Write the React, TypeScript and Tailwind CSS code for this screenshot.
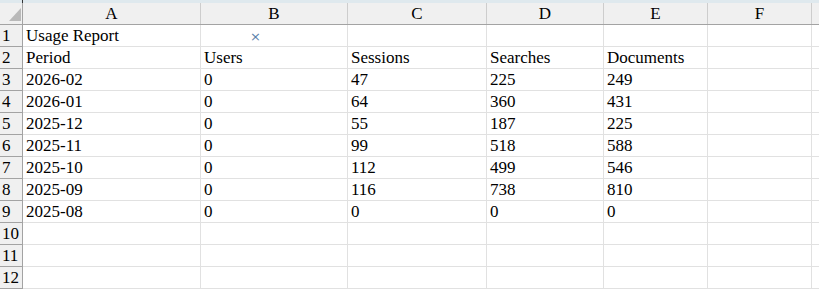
import React from "react";

const cols = [
  { name: "A", w: 178 },
  { name: "B", w: 147 },
  { name: "C", w: 139 },
  { name: "D", w: 117 },
  { name: "E", w: 104 },
  { name: "F", w: 104 },
];

const data: string[][] = [
  ["Usage Report", "", "", "", "", ""],
  ["Period", "Users", "Sessions", "Searches", "Documents", ""],
  ["2026-02", "0", "47", "225", "249", ""],
  ["2026-01", "0", "64", "360", "431", ""],
  ["2025-12", "0", "55", "187", "225", ""],
  ["2025-11", "0", "99", "518", "588", ""],
  ["2025-10", "0", "112", "499", "546", ""],
  ["2025-09", "0", "116", "738", "810", ""],
  ["2025-08", "0", "0", "0", "0", ""],
  ["", "", "", "", "", ""],
  ["", "", "", "", "", ""],
  ["", "", "", "", "", ""],
];

export default function App() {
  return (
    <div className="w-[819px] h-[290px] overflow-hidden bg-white text-black text-[17px] font-['Liberation_Serif']">
      <div className="relative h-[3px] bg-[#dfe9ee]">
        <div className="absolute left-[22px] top-0 w-px h-[3px] bg-[#333]" />
      </div>
      <div className="flex h-[22px] bg-[#f0f0f0] border-b border-[#a3a3a3]">
        <div className="relative w-[23px] shrink-0 border-r border-[#a3a3a3]">
          <svg className="absolute left-[9px] top-[5px]" width="12" height="13" viewBox="0 0 12 13">
            <polygon points="12,0 12,13 0,13" fill="#b9b9b9" />
          </svg>
        </div>
        {cols.map((c) => (
          <div
            key={c.name}
            className="shrink-0 border-r border-[#cdcdcd] text-center leading-[21px] font-['Liberation_Serif']"
            style={{ width: c.w }}
          >
            {c.name}
          </div>
        ))}
        <div className="flex-1" />
      </div>
      {data.map((row, i) => (
        <div key={i} className="flex h-[22px]">
          <div className="w-[23px] shrink-0 bg-[#f0f0f0] border-r border-b border-[#a3a3a3] pl-[2px] leading-[21px] font-['Liberation_Serif']">
            {i + 1}
          </div>
          {row.map((v, j) => (
            <div
              key={j}
              className="relative shrink-0 border-r border-b border-[#e1e1e1] pl-[3px] leading-[21px] whitespace-nowrap font-['Liberation_Serif']"
              style={{ width: cols[j].w }}
            >
              {v}
              {i === 0 && j === 1 && (
                <span className="absolute left-[49px] top-[1px] text-[13px] leading-[21px] text-[#5a82aa] font-['DejaVu_Sans']">
                  ×
                </span>
              )}
            </div>
          ))}
          <div className="flex-1 border-b border-[#e1e1e1]" />
        </div>
      ))}
    </div>
  );
}
